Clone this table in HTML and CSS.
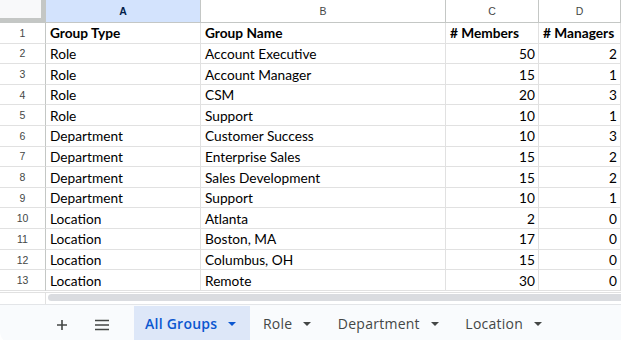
FILE: index.html
```html
<!DOCTYPE html>
<html>
<head>
<meta charset="utf-8">
<link rel="stylesheet" href="styles.css">
</head>
<body>
<div class="app">
  <div class="grid">
    <div class="corner"></div>
    <div class="colhead sel">A</div>
    <div class="colhead">B</div>
    <div class="colhead">C</div>
    <div class="colhead">D</div>

    <div class="rowhead">1</div><div class="cell bold">Group Type</div><div class="cell bold">Group Name</div><div class="cell bold">#&nbsp;Members</div><div class="cell bold">#&nbsp;Managers</div>
    <div class="rowhead">2</div><div class="cell">Role</div><div class="cell">Account Executive</div><div class="cell num">50</div><div class="cell num">2</div>
    <div class="rowhead">3</div><div class="cell">Role</div><div class="cell">Account Manager</div><div class="cell num">15</div><div class="cell num">1</div>
    <div class="rowhead">4</div><div class="cell">Role</div><div class="cell">CSM</div><div class="cell num">20</div><div class="cell num">3</div>
    <div class="rowhead">5</div><div class="cell">Role</div><div class="cell">Support</div><div class="cell num">10</div><div class="cell num">1</div>
    <div class="rowhead">6</div><div class="cell">Department</div><div class="cell">Customer Success</div><div class="cell num">10</div><div class="cell num">3</div>
    <div class="rowhead">7</div><div class="cell">Department</div><div class="cell">Enterprise Sales</div><div class="cell num">15</div><div class="cell num">2</div>
    <div class="rowhead">8</div><div class="cell">Department</div><div class="cell">Sales Development</div><div class="cell num">15</div><div class="cell num">2</div>
    <div class="rowhead">9</div><div class="cell">Department</div><div class="cell">Support</div><div class="cell num">10</div><div class="cell num">1</div>
    <div class="rowhead">10</div><div class="cell">Location</div><div class="cell">Atlanta</div><div class="cell num">2</div><div class="cell num">0</div>
    <div class="rowhead">11</div><div class="cell">Location</div><div class="cell">Boston, MA</div><div class="cell num">17</div><div class="cell num">0</div>
    <div class="rowhead">12</div><div class="cell">Location</div><div class="cell">Columbus, OH</div><div class="cell num">15</div><div class="cell num">0</div>
    <div class="rowhead">13</div><div class="cell">Location</div><div class="cell">Remote</div><div class="cell num">30</div><div class="cell num">0</div>
  </div>

  <div class="hscroll">
    <div class="hs-left"></div>
    <div class="hs-track"><div class="hs-thumb"></div></div>
  </div>

  <div class="tabbar">
    <div class="iconbtn">
      <svg width="12" height="12" viewBox="0 0 12 12"><path d="M6 1v10M1 6h10" stroke="#444746" stroke-width="1.6" fill="none"/></svg>
    </div>
    <div class="iconbtn">
      <svg width="16" height="12" viewBox="0 0 16 12"><path d="M1 1.5h14M1 6h14M1 10.5h14" stroke="#444746" stroke-width="1.6" fill="none"/></svg>
    </div>
    <div class="tabs">
      <div class="tab active"><span>All Groups</span><i class="caret"></i></div>
      <div class="tab"><span>Role</span><i class="caret"></i></div>
      <div class="tab"><span>Department</span><i class="caret"></i></div>
      <div class="tab"><span>Location</span><i class="caret"></i></div>
    </div>
  </div>
</div>
</body>
</html>
```

FILE: styles.css
```css
html, body {
  margin: 0;
  padding: 0;
  background: #ffffff;
  overflow: hidden;
}
.app {
  width: 621px;
  height: 340px;
  overflow: hidden;
  font-family: "Liberation Sans", Arial, sans-serif;
}
.grid {
  display: grid;
  grid-template-columns: 46px 155px 245px 93px 1fr;
  grid-template-rows: 23px repeat(13, 20.62px);
}
.grid > div {
  box-sizing: border-box;
  overflow: hidden;
  white-space: nowrap;
}
.corner {
  background: #f8f9fa;
  border-right: 5px solid #c4c7c5;
  border-bottom: 5px solid #c4c7c5;
}
.colhead {
  border-right: 1px solid #c4c7c5;
  border-bottom: 1px solid #c4c7c5;
  display: flex;
  align-items: center;
  justify-content: center;
  padding-bottom: 1px;
  font-size: 10.5px;
  color: #444746;
  background: #ffffff;
}
.colhead.sel {
  background: #d3e3fd;
  color: #041e49;
  font-weight: bold;
}
.rowhead {
  border-right: 1px solid #c4c7c5;
  border-bottom: 1px solid #e1e1e1;
  display: flex;
  align-items: center;
  justify-content: center;
  font-size: 10.5px;
  color: #444746;
}
.cell {
  border-right: 1px solid #e1e1e1;
  border-bottom: 1px solid #e1e1e1;
  display: flex;
  align-items: center;
  padding: 0 3px 0 4px;
  font-family: Lato, "Liberation Sans", sans-serif;
  font-size: 13.7px;
  color: #000000;
}
.cell.bold {
  font-weight: bold;
}
.cell.num {
  justify-content: flex-end;
}
.hscroll {
  display: flex;
  height: 11px;
  margin-top: 1px;
  border-top: 1px solid #e1e1e1;
}
.hs-left {
  width: 46px;
  box-sizing: border-box;
  border-right: 1px solid #e1e1e1;
  flex: none;
}
.hs-track {
  flex: 1;
  padding: 1px 0 0 2px;
}
.hs-thumb {
  height: 7px;
  border-radius: 4px 0 0 4px;
  background: #dadce0;
}
.tabbar {
  height: 40px;
  border-top: 1px solid #e3e5e8;
  background: #f9fbfd;
  display: flex;
  align-items: stretch;
  padding-left: 44px;
  gap: 4px;
  border-bottom-left-radius: 14px;
  font-family: "Open Sans", Roboto, sans-serif;
  font-size: 14px;
  letter-spacing: 0.25px;
}
.iconbtn {
  width: 36px;
  display: flex;
  align-items: center;
  justify-content: center;
}
.tabs {
  display: flex;
  margin-left: 10px;
  gap: 2px;
}
.tab {
  display: flex;
  align-items: center;
  gap: 11px;
  padding: 0 13.5px 3px 11px;
  color: #444746;
  margin-top: 1px;
}
.tab.active {
  background: #dde7f8;
  color: #0b57d0;
  font-weight: 600;
}
.caret {
  width: 0;
  height: 0;
  border-left: 4px solid transparent;
  border-right: 4px solid transparent;
  border-top: 4px solid #444746;
}
.tab.active .caret {
  border-top-color: #0b57d0;
}
```
